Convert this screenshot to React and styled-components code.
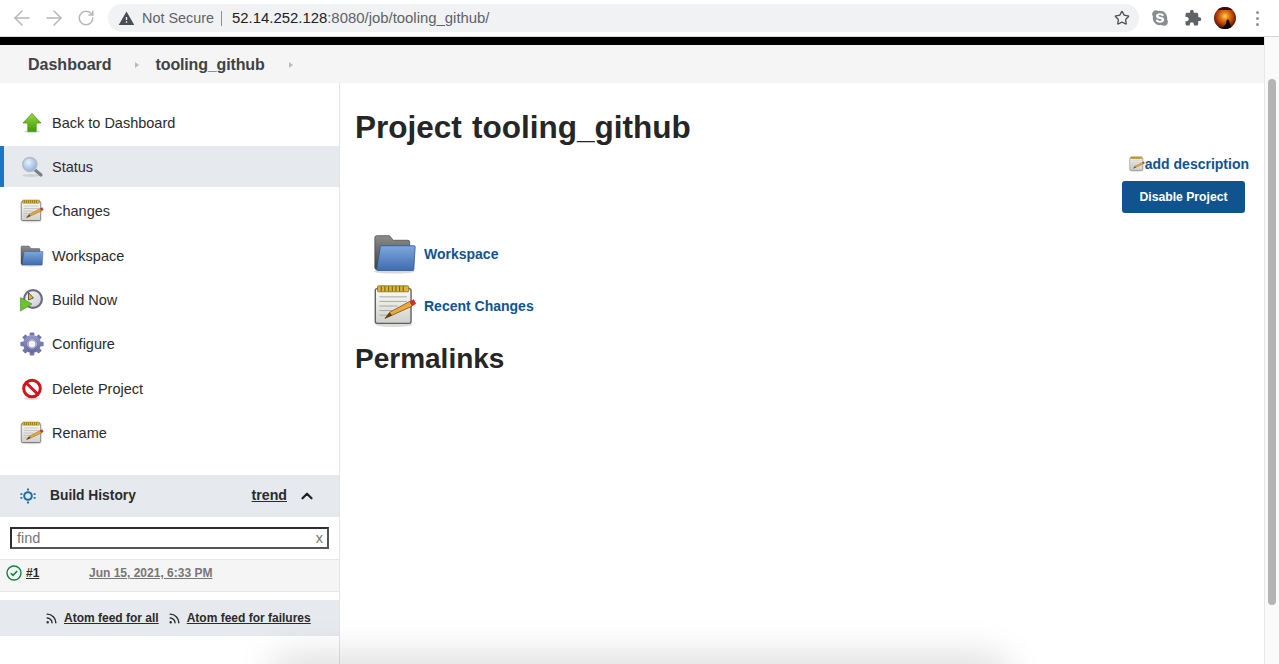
import React from "react";
import styled, { createGlobalStyle } from "styled-components";
import { ArrowLeft, ArrowRight, RotateCw, Star, Rss, ChevronUp } from "lucide-react";
import { MdExtension, MdWarning } from "react-icons/md";
import { FaSkype } from "react-icons/fa";

const Global = createGlobalStyle`
  html, body { margin: 0; padding: 0; height: 664px; overflow: hidden; background: #fff; }
  body { font-family: "Liberation Sans", Arial, sans-serif; color: #333; }
  * { box-sizing: border-box; }
`;

const Page = styled.div`
  width: 1279px; height: 664px; display: flex; flex-direction: column; overflow: hidden; position: relative;
`;
const BrowserBar = styled.div`
  height: 37px; flex: none; display: flex; align-items: center; padding: 0 0 0 13px;
  background: #fff; border-bottom: 1px solid #d6d7d9;
`;
const NavButton = styled.span`
  width: 18px; height: 18px; display: flex; align-items: center; justify-content: center;
  color: ${p => p.$dim ? "#b5b7ba" : "#5f6368"}; margin-right: ${p => p.$gap || 0}px;
  svg { flex: none; }
`;
const Omnibox = styled.div`
  width: 1031px; height: 28px; flex: none; border-radius: 14px; background: #f0f2f4;
  display: flex; align-items: center; padding: 0 9px 0 10px; font-size: 14.9px;
`;
const SecureText = styled.span`
  color: #5f6368; margin-left: 7px; padding-right: 7px; border-right: 1px solid #8b8e92; line-height: 15px; font-size: 14.4px;
`;
const Host = styled.span`color: #202124; margin-left: 10px;`;
const UrlPath = styled.span`color: #5f6368;`;
const Spacer = styled.span`flex: 1;`;
const ToolIcons = styled.div`
  display: flex; align-items: center; margin-left: 11px; color: #5f6368; height: 24px;
`;
const ToolIcon = styled.span`
  width: 20px; display: flex; justify-content: center; margin-right: ${p => p.$gap}px; color: ${p => p.$c || "#5f6368"};
`;
const AvatarSvg = styled.svg`flex: none; display: block; margin-right: 20px;`;
const MenuDots = styled.span`
  display: flex; flex-direction: column; gap: 3px;
`;
const Dot = styled.i`width: 3px; height: 3px; border-radius: 50%; background: #8e9195; display: block;`;

const Viewport = styled.div`flex: 1; display: flex; min-height: 0;`;
const Content = styled.div`flex: 1; display: flex; flex-direction: column; min-width: 0;`;
const Scrollbar = styled.div`
  width: 15px; flex: none; background: #fafafa; border-left: 1px solid #e7e7e7; padding: 42px 3px 0 3px;
`;
const Thumb = styled.div`width: 8px; height: 526px; background: #b4b4b4; border-radius: 4px;`;
const BlackBar = styled.div`height: 8px; background: #000; flex: none;`;
const Breadcrumbs = styled.nav`
  height: 38px; flex: none; background: #f5f5f5; display: flex; align-items: center; padding: 1px 0 0 28px;
  font-size: 16px; font-weight: 700; color: #3f4246;
`;
const CrumbTail = styled.span`letter-spacing: -0.15px;`;
const Caret = styled.span`
  width: 0; height: 0; border-left: 4px solid #b9b9b9; border-top: 3.5px solid transparent; border-bottom: 3.5px solid transparent;
  margin: 0 ${p => p.$right}px 0 ${p => p.$left}px;
`;
const Columns = styled.div`flex: 1; display: flex; min-height: 0;`;
const Side = styled.aside`
  width: 340px; flex: none; border-right: 1px solid #e4e4e4; padding-top: 19px; display: flex; flex-direction: column;
`;
const Tasks = styled.div`display: flex; flex-direction: column; height: 373px;`;
const Task = styled.a`
  height: 41px; margin-bottom: 3.4px; flex: none; display: flex; align-items: center; padding-left: ${p => p.$active ? "16px" : "20px"};
  font-size: 14.5px; color: #2b2b2b; gap: 8px;
  ${p => p.$active ? "background: #e6e9ed; border-left: 4px solid #1a74c8;" : ""}
`;
const HistoryHead = styled.div`
  height: 42px; flex: none; background: #e6e9ed; display: flex; align-items: center; padding: 0 0 1px 19px; font-weight: 700; color: #2b2b2b;
`;
const HistoryTitle = styled.span`margin-left: 13px; flex: 1; font-size: 13.8px;`;
const Trend = styled.a`text-decoration: underline; font-size: 14.2px; margin: 0 11px 2px 0;`;
const ChevronSlot = styled.span`display: flex; margin-right: 23px; color: #222;`;
const FindBox = styled.div`
  margin: 10px 10px 10px 10px; width: 319px; height: 22px; flex: none; border: 2px solid #2e2e2e; border-bottom-color: #555; border-right-color: #555;
  display: flex; align-items: center; justify-content: space-between; padding: 0 4px 0 5px; font-size: 14.5px; color: #767676;
`;
const BuildRow = styled.div`
  height: 33px; flex: none; background: #f5f5f5; border-top: 1px solid #e7e7e7; border-bottom: 1px solid #e7e7e7;
  display: flex; align-items: center; padding: 0 0 5px 6px; font-size: 12px; font-weight: 700;
`;
const BuildNum = styled.a`color: #2b2b2b; text-decoration: underline; margin-left: 4px; width: 63px;`;
const BuildDate = styled.a`color: #777; text-decoration: underline;`;
const FeedBar = styled.div`
  margin-top: 8px; height: 36px; flex: none; background: #e6e9ed; display: flex; align-items: center; padding-left: 45px;
  font-size: 12px; font-weight: 700; color: #2b2b2b;
`;
const FeedLink = styled.a`text-decoration: underline; margin: 0 9px 0 6px;`;
const Main = styled.main`flex: 1; position: relative; padding: 26px 15px 0 15px; min-width: 0; display: flex; flex-direction: column;`;
const Title = styled.h1`font-size: 31.5px; word-spacing: 1.5px; line-height: 37px; margin: 0; font-weight: 700; color: #262626;`;
const Actions = styled.div`display: flex; flex-direction: column; align-items: flex-end; margin-top: 7px;`;
const DescLink = styled.a`
  display: flex; align-items: center; font-size: 14px; font-weight: 700; color: #0e5493; height: 22px;
`;
const DisableBtn = styled.button`
  margin: 6px 4px 0 0; width: 123px; height: 32px; background: #11538f; color: #fff; border: 0; border-radius: 3px;
  font: 700 12.2px "Liberation Sans", Arial, sans-serif;
`;
const Links = styled.div`display: flex; flex-direction: column; margin-left: 18px; margin-top: 15px;`;
const BigLink = styled.a`
  display: flex; align-items: center; height: 52px; gap: 7px; font-size: 14px; font-weight: 700; color: #0e5493;
`;
const H2 = styled.h2`font-size: 28px; line-height: 30px; margin: 12px 0 0 0; font-weight: 700; color: #262626;`;
const Shadow = styled.div`
  position: absolute; left: 278px; right: 278px; bottom: -32px; height: 32px; border-radius: 16px;
  box-shadow: 0 0 36px 10px rgba(0,0,0,.13); background: #000; pointer-events: none;
`;
const IconSvg = styled.svg`flex: none; display: block;`;

const Arrow = ({ s = 24 }) => (
  <IconSvg width={s} height={s} viewBox="0 0 24 24">
    <defs><linearGradient id="ga" x1="0" y1="0" x2="0" y2="1"><stop offset="0" stopColor="#9ad83a" /><stop offset="1" stopColor="#3f9a0c" /></linearGradient></defs>
    <ellipse cx="12" cy="20.5" rx="8" ry="1.5" fill="#000" opacity=".16" />
    <path d="M12 2.5 21 12h-4.8v8.5H7.8V12H3z" fill="url(#ga)" stroke="#4b9a14" strokeWidth=".8" strokeLinejoin="round" />
  </IconSvg>
);
const Glass = ({ s = 24 }) => (
  <IconSvg width={s} height={s} viewBox="0 0 24 24">
    <defs><radialGradient id="gg" cx=".4" cy=".35" r=".8"><stop offset="0" stopColor="#e8f1fb" /><stop offset="1" stopColor="#79a6d8" /></radialGradient></defs>
    <ellipse cx="11" cy="20.5" rx="9" ry="1.4" fill="#000" opacity=".1" />
    <path d="M14.5 14.5 21 20" stroke="#7a7f86" strokeWidth="3.2" strokeLinecap="round" />
    <circle cx="9.8" cy="9.5" r="7" fill="url(#gg)" stroke="#b6bcc4" strokeWidth="1.6" />
  </IconSvg>
);
const Notepad = ({ s = 24 }) => (
  <IconSvg width={s} height={s} viewBox="0 0 48 48">
    <defs><linearGradient id="gn" x1="0" y1="0" x2="0" y2="1"><stop offset="0" stopColor="#fbfbf8" /><stop offset="1" stopColor="#cfcfcc" /></linearGradient></defs>
    <ellipse cx="23" cy="44.5" rx="20" ry="2.4" fill="#000" opacity=".14" />
    <rect x="2.5" y="5" width="39" height="38" rx="2" fill="url(#gn)" stroke="#5f5f62" strokeWidth="1.5" />
    <rect x="5" y="2" width="34" height="6.5" rx="1" fill="#d9b640" stroke="#8e6d14" strokeWidth=".9" />
    <path d="M9 2.5v5.5M13 2.5v5.5M17 2.5v5.5M21 2.5v5.5M25 2.5v5.5M29 2.5v5.5M33 2.5v5.5" stroke="#7c5e10" strokeWidth="1.2" />
    <path d="M7 14h30M7 19h30M7 24h20M7 29h14M7 34h9" stroke="#a2a2a4" strokeWidth="1" />
    <path d="M13 37.5 18 31 40 19l3 5-22 10z" fill="#eba93c" stroke="#7d5216" strokeWidth=".9" strokeLinejoin="round" />
    <path d="M13 37.5 18 31 21 34z" fill="#5a3f18" />
    <path d="M40 19l3 5 4-2.4-2.6-5z" fill="#d3302c" />
  </IconSvg>
);
const Folder = ({ s = 24 }) => (
  <IconSvg width={s} height={s} viewBox="0 0 48 48">
    <defs><linearGradient id="gf" x1="0" y1="0" x2="0" y2="1"><stop offset="0" stopColor="#7ea7de" /><stop offset="1" stopColor="#3f6cad" /></linearGradient>
    <linearGradient id="gd" x1="0" y1="0" x2="0" y2="1"><stop offset="0" stopColor="#8c8c8c" /><stop offset="1" stopColor="#3d3d3d" /></linearGradient></defs>
    <ellipse cx="23" cy="43" rx="22" ry="2.4" fill="#000" opacity=".15" />
    <path d="M2 6a2 2 0 0 1 2-2h14l4 5h16a2 2 0 0 1 2 2v30H4a2 2 0 0 1-2-2z" fill="url(#gd)" stroke="#474747" strokeWidth=".8" />
    <path d="M8 16a1 1 0 0 1 1-1h36a1 1 0 0 1 1 1l-1.5 25a1 1 0 0 1-1 1H5a1 1 0 0 1-1-1z" fill="url(#gf)" stroke="#2f5a98" strokeWidth=".9" />
  </IconSvg>
);
const Clock = ({ s = 24 }) => (
  <IconSvg width={s} height={s} viewBox="0 0 24 24">
    <defs><linearGradient id="gc" x1="0" y1="0" x2="1" y2="1"><stop offset="0" stopColor="#f7f6ee" /><stop offset="1" stopColor="#cfcdd8" /></linearGradient></defs>
    <circle cx="13" cy="11" r="10" fill="#6c6a8a" />
    <circle cx="13" cy="11" r="7.8" fill="url(#gc)" />
    <path d="M8.5 4.5 13.5 10 8.5 12z" fill="#e2b63a" stroke="#3e3d4a" strokeWidth=".8" />
    <path d="M0.5 9.5 12 16 0.5 23z" fill="#6cc32e" stroke="#3f8a15" strokeWidth=".6" />
  </IconSvg>
);
const Gear = ({ s = 24 }) => {
  const teeth = [0, 45, 90, 135, 180, 225, 270, 315];
  return (
    <IconSvg width={s} height={s} viewBox="0 0 24 24">
      <defs><linearGradient id="gw" gradientUnits="userSpaceOnUse" x1="0" y1="0" x2="0" y2="24"><stop offset="0" stopColor="#9ea1d2" /><stop offset="1" stopColor="#5d6099" /></linearGradient></defs>
      {teeth.map(a => <rect key={a} x="9.7" y="0.4" width="4.6" height="6" rx="1" fill="#7376ad" transform={`rotate(${a} 12 12)`} />)}
      <circle cx="12" cy="12" r="6.8" fill="none" stroke="url(#gw)" strokeWidth="4.4" />
      <circle cx="12" cy="12" r="4" fill="#f3f3f6" stroke="#585b8e" strokeWidth=".6" />
    </IconSvg>
  );
};
const NoEntry = ({ s = 24 }) => (
  <IconSvg width={s} height={s} viewBox="0 0 24 24">
    <ellipse cx="12" cy="21.5" rx="8" ry="1.4" fill="#000" opacity=".15" />
    <circle cx="12" cy="11.5" r="8.3" fill="#fff" stroke="#d2141c" strokeWidth="3" />
    <path d="M6.3 6 17.6 17" stroke="#d2141c" strokeWidth="3" />
  </IconSvg>
);
const HistoryIcon = () => (
  <IconSvg width="18" height="18" viewBox="0 0 18 18" fill="none" stroke="#1d6aa8">
    <circle cx="9" cy="9" r="3.8" strokeWidth="2" />
    <path d="M9 1.6v2M9 14.4v2M2.4 6.2v1.8M2.4 10v1.8M15.6 6.2v1.8M15.6 10v1.8" strokeWidth="1.9" />
  </IconSvg>
);
const BuildOk = () => (
  <IconSvg width="16" height="16" viewBox="0 0 16 16" fill="none" stroke="#13833f">
    <circle cx="8" cy="8" r="7" strokeWidth="1.4" />
    <path d="M4.8 8.2 7 10.4l4.2-4.4" strokeWidth="1.6" />
  </IconSvg>
);
const Avatar = () => (
  <AvatarSvg width="22" height="22" viewBox="0 0 22 22">
    <defs>
      <radialGradient id="gav" cx=".5" cy=".42" r=".6">
        <stop offset="0" stopColor="#ffe070" /><stop offset=".2" stopColor="#f5931a" />
        <stop offset=".55" stopColor="#c04a0a" /><stop offset=".85" stopColor="#6a1c06" /><stop offset="1" stopColor="#2a0a04" />
      </radialGradient>
      <clipPath id="cav"><circle cx="11" cy="11" r="11" /></clipPath>
    </defs>
    <g clipPath="url(#cav)">
      <rect width="22" height="22" fill="url(#gav)" />
      <rect width="22" height="3" fill="#3a0d06" />
      <path d="M0 20h22v2H0zM9 20l3-3 .5-3.5 1.4-1.2 1.2 1 .6 3 2 3.7z" fill="#140604" />
    </g>
  </AvatarSvg>
);

const tasks = [
  ["Back to Dashboard", Arrow], ["Status", Glass, true], ["Changes", Notepad], ["Workspace", Folder],
  ["Build Now", Clock], ["Configure", Gear], ["Delete Project", NoEntry], ["Rename", Notepad],
];

export default function App() {
  return (
    <Page>
      <Global />
      <BrowserBar>
        <NavButton $dim $gap={14}><ArrowLeft size={24} strokeWidth={1.5} /></NavButton>
        <NavButton $dim $gap={14}><ArrowRight size={24} strokeWidth={1.5} /></NavButton>
        <NavButton $dim $gap={13}><RotateCw size={18} strokeWidth={2} /></NavButton>
        <Omnibox>
          <MdWarning size={17} color="#4a4d52" />
          <SecureText>Not Secure</SecureText>
          <Host>52.14.252.128</Host><UrlPath>:8080/job/tooling_github/</UrlPath>
          <Spacer />
          <Star size={16} strokeWidth={2} color="#4f5256" />
        </Omnibox>
        <ToolIcons>
          <ToolIcon $gap={13} $c="#8a8d90"><FaSkype size={18} /></ToolIcon>
          <ToolIcon $gap={11}><MdExtension size={18} /></ToolIcon>
          <Avatar />
          <MenuDots><Dot /><Dot /><Dot /></MenuDots>
        </ToolIcons>
      </BrowserBar>
      <Viewport>
        <Content>
          <BlackBar />
          <Breadcrumbs>
            Dashboard<Caret $left={23} $right={17} /><CrumbTail>tooling_github</CrumbTail><Caret $left={24} $right={0} />
          </Breadcrumbs>
          <Columns>
            <Side>
              <Tasks>
                {tasks.map(([label, Icon, active]) => (
                  <Task key={label} $active={active}><Icon s={24} />{label}</Task>
                ))}
              </Tasks>
              <HistoryHead>
                <HistoryIcon /><HistoryTitle>Build History</HistoryTitle><Trend>trend</Trend>
                <ChevronSlot><ChevronUp size={18} strokeWidth={3} /></ChevronSlot>
              </HistoryHead>
              <FindBox><span>find</span><span>x</span></FindBox>
              <BuildRow><BuildOk /><BuildNum>#1</BuildNum><BuildDate>Jun 15, 2021, 6:33 PM</BuildDate></BuildRow>
              <FeedBar>
                <Rss size={13} strokeWidth={2.6} /><FeedLink>Atom feed for all</FeedLink>
                <Rss size={13} strokeWidth={2.6} /><FeedLink>Atom feed for failures</FeedLink>
              </FeedBar>
            </Side>
            <Main>
              <Title>Project tooling_github</Title>
              <Actions>
                <DescLink><Notepad s={16} />add description</DescLink>
                <DisableBtn>Disable Project</DisableBtn>
              </Actions>
              <Links>
                <BigLink><Folder s={44} />Workspace</BigLink>
                <BigLink><Notepad s={44} />Recent Changes</BigLink>
              </Links>
              <H2>Permalinks</H2>
            </Main>
          </Columns>
        </Content>
        <Scrollbar><Thumb /></Scrollbar>
      </Viewport>
      <Shadow />
    </Page>
  );
}
